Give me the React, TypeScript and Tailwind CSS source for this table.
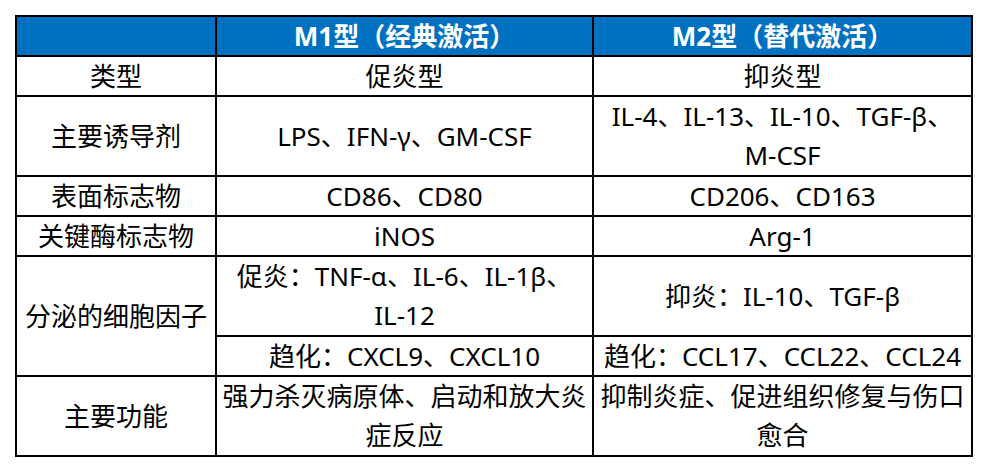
const Cell = ({
  children,
  className = "",
}: {
  children?: React.ReactNode;
  className?: string;
}) => (
  <div
    className={`flex items-center justify-center bg-white text-center leading-[39px] whitespace-nowrap ${className}`}
  >
    <div>{children}</div>
  </div>
);

const Head = ({ children }: { children?: React.ReactNode }) => (
  <div className="flex items-center justify-center bg-[#0070c0] font-bold text-white whitespace-nowrap">
    {children}
  </div>
);

export default function App() {
  return (
    <div className="min-h-screen bg-white p-[15px] font-['Noto_Sans','Noto_Sans_CJK_SC',sans-serif] text-[26px] text-black">
      <div className="grid w-fit grid-cols-[198px_375px_377px] grid-rows-[38px_38px_78px_38px_38px_78px_38px_78px] gap-[2px] bg-black p-[2px]">
        <Head />
        <Head>M1型（经典激活）</Head>
        <Head>M2型（替代激活）</Head>

        <Cell>类型</Cell>
        <Cell>促炎型</Cell>
        <Cell>抑炎型</Cell>

        <Cell>主要诱导剂</Cell>
        <Cell>LPS、IFN-γ、GM-CSF</Cell>
        <Cell>
          IL-4、IL-13、IL-10、TGF-β、
          <br />
          M-CSF
        </Cell>

        <Cell>表面标志物</Cell>
        <Cell>CD86、CD80</Cell>
        <Cell>CD206、CD163</Cell>

        <Cell>关键酶标志物</Cell>
        <Cell>iNOS</Cell>
        <Cell>Arg-1</Cell>

        <Cell className="row-span-2">分泌的细胞因子</Cell>
        <Cell>
          促炎：TNF-α、IL-6、IL-1β、
          <br />
          IL-12
        </Cell>
        <Cell>抑炎：IL-10、TGF-β</Cell>
        <Cell>趋化：CXCL9、CXCL10</Cell>
        <Cell>趋化：CCL17、CCL22、CCL24</Cell>

        <Cell>主要功能</Cell>
        <Cell>
          强力杀灭病原体、启动和放大炎
          <br />
          症反应
        </Cell>
        <Cell>
          抑制炎症、促进组织修复与伤口
          <br />
          愈合
        </Cell>
      </div>
    </div>
  );
}
